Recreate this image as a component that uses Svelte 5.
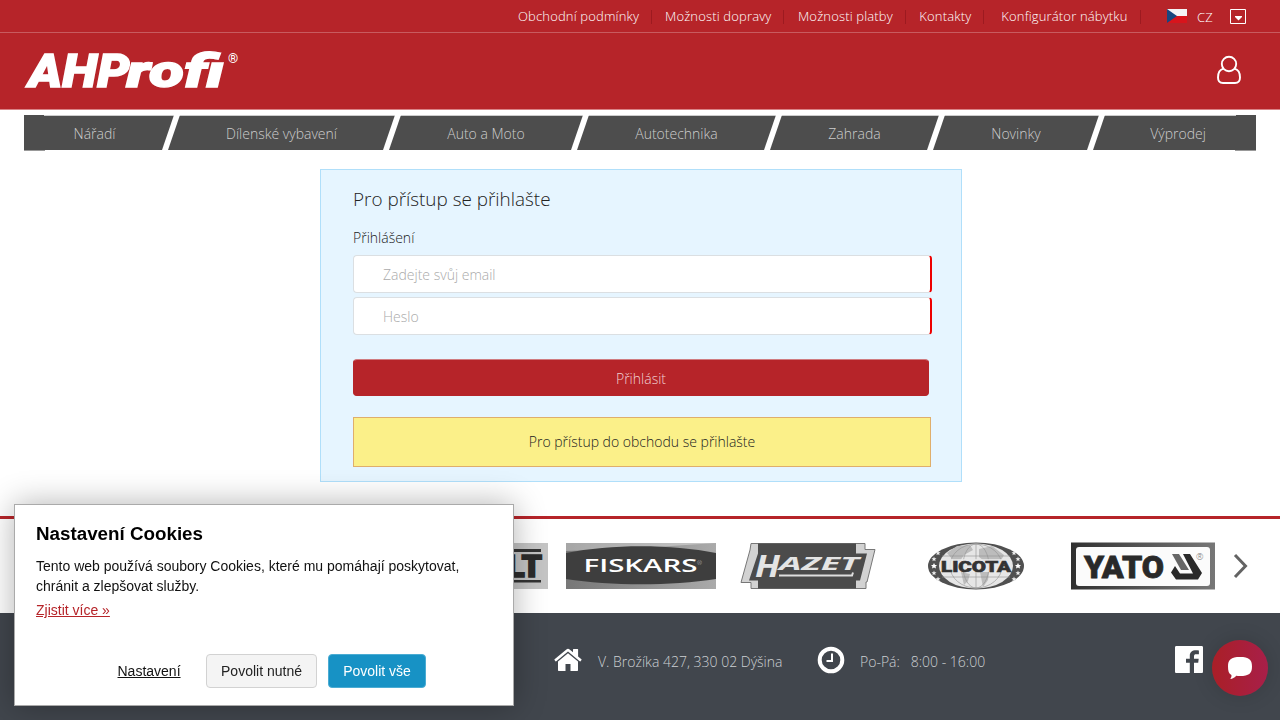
<script>
  const topLinks = [
    { label: 'Obchodní podmínky', gap: 13 },
    { label: 'Možnosti dopravy', gap: 13.5 },
    { label: 'Možnosti platby', gap: 13.5 },
    { label: 'Kontakty', gap: 17 },
    { label: 'Konfigurátor nábytku', gap: 0 }
  ];
  const categories = ['Nářadí', 'Dílenské vybavení', 'Auto a Moto', 'Autotechnika', 'Zahrada', 'Novinky', 'Výprodej'];
  const stars = [[-42, -7], [-38, -13], [-42, 7], [-38, 13], [42, -7], [38, -13], [42, 7], [38, 13]];
</script>

<div class="page">
  <header>
    <div class="topbar">
      {#each topLinks as link}
        <a href="#top" class="toplink">{link.label}</a><i class="sep" style="margin-right: {link.gap}px"></i>
      {/each}
      <div class="lang">
        <svg width="20" height="14" viewBox="0 0 20 14"><path fill="#f4f4f6" d="M0 0h20v7H0z" /><path fill="#d8141c" d="M0 7h20v7H0z" /><path fill="#17467f" d="M0 0l10 7-10 7z" /></svg>
        <span>CZ</span>
        <svg class="drop" width="16" height="15" viewBox="0 0 16 15"><path fill="none" stroke="#fff" d="M.5.5h15v14H.5z" /><path fill="#fff" d="M5 7h7v1L8.500 11.500 5 8z" /></svg>
      </div>
    </div>
    <div class="brandbar">
      <svg class="logo" width="220" height="60" viewBox="0 0 220 60">
        <text y="42.500" font-size="46" stroke="#fff" stroke-width="1.400"><tspan x="4.500" textLength="101" lengthAdjust="spacingAndGlyphs">AHP</tspan><tspan x="102.500" textLength="97" lengthAdjust="spacingAndGlyphs">rofi</tspan></text>
        <text class="reg" x="204" y="18.500" font-size="13">®</text>
      </svg>
      <svg class="user" width="26" height="30" viewBox="0 0 26 30" fill="none" stroke="#fff" stroke-width="1.900">
        <circle cx="13" cy="9" r="7.200" />
        <path d="M7.500 13.600C3.500 14.500 2 18 2 22.500c0 3.500 1.800 5.500 5 5.500h12c3.200 0 5-2 5-5.500 0-4.500-1.500-8-5.500-8.900" />
      </svg>
    </div>
  </header>

  <nav>
    {#each categories as c}
      <a href="#cat"><span>{c}</span></a>
    {/each}
  </nav>

  <main>
    <h1>Pro přístup se přihlašte</h1>
    <div class="label">Přihlášení</div>
    <input class="email" type="text" placeholder="Zadejte svůj email" />
    <input class="pass" type="password" placeholder="Heslo" />
    <button class="login">Přihlásit</button>
    <div class="notice">Pro přístup do obchodu se přihlašte</div>
  </main>

  <section class="brands">
    <svg class="b-lt" width="150" height="46" viewBox="0 0 150 46">
      <path fill="#c4c4c4" d="M0 0h150v46H0z" />
      <path fill="#333" d="M40 6h103v3H40zM40 37h103v2.500H40z" />
      <text x="109" y="34" font-family="Roboto" font-weight="900" font-size="31" textLength="35" lengthAdjust="spacingAndGlyphs" fill="#2c2c2c" stroke="#2c2c2c" stroke-width="1.500">LT</text>
    </svg>
    <svg class="b-fiskars" width="150" height="46" viewBox="0 0 150 46">
      <defs><linearGradient id="fg"><stop offset="0" stop-color="#777" /><stop offset="1" stop-color="#aaa" /></linearGradient></defs>
      <path fill="url(#fg)" d="M0 0h150v46H0z" />
      <path fill="#fff" d="M0 0h150L60 6 0 8z" opacity=".35" />
      <path fill="#3e3e3e" d="M0 10C45 1 105 1 150 10v26C105 43 45 43 0 36z" />
      <text x="17.500" y="29.300" font-family="Open Sans" font-weight="600" font-size="18" textLength="114" lengthAdjust="spacingAndGlyphs" fill="#fff">FISKARS</text>
      <text x="131" y="22" font-family="Open Sans" font-size="6" fill="#ddd">®</text>
    </svg>
    <svg class="b-hazet" width="136" height="48" viewBox="0 0 136 48">
      <path fill="#d2d2d2" stroke="#777" d="M11 1.500h114v6h10L127 40h-1v6.500H11v-6H1L10 8z" />
      <path fill="#4b4b4b" d="M18 1.500h98v10h11l-7 27h-4v8H18v-8H9l9-27z" />
      <path fill="none" stroke="#dedede" stroke-width="2" d="M39 33.500h73l1-3" />
      <g font-family="Open Sans" font-style="italic" font-weight="700" fill="#e4e4e4">
        <text x="15" y="35" font-size="30" textLength="25" lengthAdjust="spacingAndGlyphs">H</text>
        <text x="39" y="28" font-size="18" textLength="80" lengthAdjust="spacingAndGlyphs">AZET</text>
      </g>
    </svg>
    <svg class="b-licota" width="98" height="48" viewBox="-49 -24 98 48">
      <ellipse rx="48" ry="23.500" fill="#505050" />
      <ellipse rx="37" ry="22.500" fill="#e6e6e6" />
      <path fill="#bcbcbc" d="M-29-13l10-7 13-1 3 5-9 5-4 6-7-1zM3-17l13-3 12 9-5 9-12-1-8-6zM-15 6l9 2-2 7-4 4zM4 6l9 0-1 8-5 7z" />
      <g fill="none" stroke="#909090" stroke-width=".600"><ellipse rx="26" ry="22" /><ellipse rx="13" ry="22" /><path d="M0-22v44M-34-10h68M-34 11h68" /></g>
      <path fill="#e9e9e9" d="M-35-7h70V6h-70z" opacity=".8" />
      {#each stars as [x, y]}
        <path fill="#eee" transform="translate({x} {y})" d="M0-2.600L.7-.8 2.500-.8 1.100.4 1.600 2.200 0 1.200-1.600 2.200-1.100.4-2.500-.8-.7-.8z" />
      {/each}
      <path fill="#fff" d="M-42-3l1 2h2l-1.500 1.500.5 2-2-1-2 1 .5-2L-45-1h2zM42-3l1 2h2l-1.500 1.500.5 2-2-1-2 1 .5-2L39-1h2z" />
      <text x="-35" y="5.500" font-family="Roboto" font-weight="900" font-size="15.500" textLength="70" lengthAdjust="spacingAndGlyphs" fill="#333" stroke="#333" stroke-width=".6">LICOTA</text>
    </svg>
    <svg class="b-yato" width="144" height="48" viewBox="0 0 144 48">
      <defs><linearGradient id="yg"><stop offset="0" stop-color="#303030" /><stop offset=".5" stop-color="#555" /><stop offset="1" stop-color="#777" /></linearGradient></defs>
      <path fill="url(#yg)" d="M0 .5h144v47H0z" />
      <rect x="5" y="5" width="134" height="39" rx="3" fill="#fbfbfb" />
      <text x="13" y="36" font-family="Roboto" font-weight="900" font-size="32" textLength="80" lengthAdjust="spacingAndGlyphs" fill="#292929" stroke="#292929" stroke-width=".8">YATO</text>
      <path fill="#666" d="M101 12h7l10 16h-8z" />
      <path fill="#292929" d="M112 12h7l12 19-4 6.500h-22l-5-7 4-6.500 5 7.500h13z" />
      <text x="125" y="18" font-family="Open Sans" font-size="9" fill="#777">®</text>
    </svg>
    <svg class="arrow" width="16" height="26" viewBox="0 0 16 26"><path fill="none" stroke="#636363" stroke-width="3" d="M2 2l10.500 11L2 24" /></svg>
  </section>

  <footer>
    <svg class="home" width="28" height="24" viewBox="0 0 28 24" fill="#fff"><path d="M14 5.200L4 13.500V22c0 .8.4 1 1 1h6.500v-7h5v7H23c.7 0 1-.4 1-1v-8.500z" /><path d="M14 .8c.6 0 1.100.2 1.600.6L19 4.300V1.500c0-.4.200-.6.600-.6h4c.4 0 .5.200.5.600v7l3.300 2.800c.3.300.3.500.1.800l-1 1.100c-.3.300-.5.300-.8.100L14 3.500 2.300 13.300c-.3.200-.6.200-.8-.1l-1-1.100c-.2-.3-.2-.5.1-.8l11.800-9.900C12.900 1 13.400.8 14 .8z" /></svg>
    <span class="addr">V. Brožíka 427, 330 02 Dýšina</span>
    <svg class="clock" width="28" height="28" viewBox="0 0 28 28" fill="none" stroke="#fff"><circle cx="14" cy="14" r="11.300" stroke-width="4" /><path stroke-width="2" d="M15 7.500V15h-5.500" /></svg>
    <span class="hours">Po-Pá:&nbsp;&nbsp; 8:00 - 16:00</span>
    <svg class="fb" width="28" height="28" viewBox="0 0 28 28"><path fill="#fff" d="M1.500 0h25c1 0 1.500.5 1.500 1.500v24c0 1-.5 1.500-1.500 1.500H19V16.800h4.200l.5-4.100H19v-2.200c0-1.700.5-2.300 2.300-2.300h2.600V4.400c-5.900-.9-9.100.8-9.100 5.400v2.900H11v4.100h3.800V27H1.500C.5 27 0 26.500 0 25.500v-24C0 .5.500 0 1.500 0z" /></svg>
  </footer>
</div>

<div class="cookies">
  <h2>Nastavení Cookies</h2>
  <p>Tento web používá soubory Cookies, které mu pomáhají poskytovat, chránit a zlepšovat služby.</p>
  <a class="more" href="#more">Zjistit více »</a>
  <div class="actions">
    <a class="settings" href="#settings">Nastavení</a>
    <button class="need">Povolit nutné</button>
    <button class="all">Povolit vše</button>
  </div>
</div>

<button class="chat" aria-label="Chat">
  <svg width="26" height="24" viewBox="0 0 26 24"><path fill="#fff" d="M13 1c9 0 12 2.500 12 9.500S22 20 13 20c-1.400 0-2.700 0-3.800-.2C7.800 21.500 6 22.600 4 23c-.6 0-.7-.5-.3-.9.700-.8.900-1.700.7-3.100C1.800 17.500 1 15 1 10.500 1 3.500 4 1 13 1z" /></svg>
</button>

<style>
  :global(body) { margin: 0; background: #fff; overflow: hidden; }
  * { box-sizing: border-box; }
  a { color: inherit; text-decoration: none; }
  svg { display: block; flex: none; }
  button { font-family: inherit; padding: 0; }
  .page { width: 1280px; height: 720px; overflow: hidden; font-family: 'Open Sans', sans-serif; font-weight: 300; font-size: 14px; display: flex; flex-direction: column; white-space: nowrap; }
  header { background: #b62429; height: 110px; flex: none; color: #fff; border-bottom: 1px solid #d98386; }
  .topbar { height: 33px; border-bottom: 1px solid #c85b5f; display: flex; align-items: center; padding-left: 518px; font-size: 13px; letter-spacing: 0.16px; }
  .sep { width: 1px; height: 14px; background: #9d1a20; margin-left: 12px; margin-top: 2px; }
  .lang { display: flex; align-items: center; margin-left: 26.5px; }
  .lang span { margin: 2px 17px 0 10px; }
  .brandbar { display: flex; height: 76px; justify-content: space-between; padding: 11px 38px 0 24px; }
  .logo { font-family: Roboto, sans-serif; font-style: italic; font-weight: 900; fill: #fff; }
  .reg { font-style: normal; font-weight: 500; }
  .user { margin-top: 11px; }
  nav { margin: 5px 24px 0; height: 36px; flex: none; display: grid; grid-template-columns: 147px 221px 188px 193px 163px 160px 160px; background: linear-gradient(90deg, #999 21px, transparent 21px, transparent 1211px, #999 1211px); overflow: hidden; color: #ccc; }
  nav a { position: relative; height: 35px; background: #4d4d4d; border-top: 1px solid #ccc; display: flex; align-items: center; justify-content: center; }
  nav a:not(:last-child)::after { content: ''; position: absolute; z-index: 1; right: -3px; top: -1px; width: 6px; height: 35px; background: #fff; transform: skewX(-18.9deg); }
  nav a:first-child { padding-right: 6px; border-image: linear-gradient(90deg, #4d4d4d 21px, #ccc 21px) 1; }
  nav a:last-child { padding-left: 4px; border-image: linear-gradient(90deg, #ccc 139px, #4d4d4d 139px) 1; }
  main { margin: 18px 0 0 320px; width: 642px; height: 313px; flex: none; background: #e6f5ff; border: 1px solid #b0dffa; padding: 15px 29px 0 32px; display: flex; flex-direction: column; color: #222; }
  h1 { font-size: 18.9px; font-weight: 300; line-height: 28px; margin: 0; }
  .label { margin-top: 15px; line-height: 20px; }
  input { font: 300 14px 'Open Sans', sans-serif; width: 579px; height: 38px; border: 1px solid #dbdfe2; border-right: 2px solid #e00; border-radius: 4px; background: #fff; padding: 0 29px; outline: none; }
  input::placeholder { color: #aaa; opacity: 1; }
  .email { margin-top: 7px; }
  .pass { margin-top: 4px; }
  .login { margin-top: 24px; width: 576px; height: 37px; border: 1px solid #b62429; border-top-color: #d07b80; border-radius: 4px; background: #b62429; color: #f0d0d1; font-weight: 300; font-size: 14px; padding-top: 2px; }
  .notice { margin-top: 21px; width: 578px; height: 50px; background: #fbf089; border: 1px solid #dfae6c; text-align: center; line-height: 48px; }
  .brands { margin-top: 34px; height: 97px; flex: none; border-top: 3px solid #b62429; padding: 0 32px 0 398px; display: flex; align-items: center; }
  .b-fiskars { margin-left: 18px; }
  .b-hazet { margin-left: 24px; }
  .b-licota { margin-left: 51px; }
  .b-yato { margin-left: 46px; }
  .arrow { margin-left: 18px; }
  footer { background: #41464d; flex: 1; color: #ccd0d3; display: flex; align-items: flex-start; padding: 33px 0 0 554px; }
  .home { margin-top: 2px; }
  .addr, .hours { line-height: 20px; margin-top: 6px; }
  .addr { margin-left: 16px; width: 220px; }
  .clock { margin-left: -1px; }
  .hours { margin-left: 15px; width: 315px; }
  .cookies { position: fixed; left: 14px; top: 504px; width: 500px; height: 202px; background: #fff; border: 1px solid #aaa; box-shadow: 0 0 30px rgba(0, 0, 0, 0.3); padding: 17px 21px; font-family: 'Liberation Sans', sans-serif; font-size: 14px; color: #111; }
  h2 { font-size: 18.8px; line-height: 24px; margin: 0; color: #000; }
  p { margin: 10px 0 0; line-height: 20px; width: 440px; }
  .more { display: block; color: #b62429; text-decoration: underline; line-height: 20px; margin-top: 4px; }
  .actions { display: flex; align-items: center; margin: 34px 0 0 81.5px; }
  .settings { text-decoration: underline; width: 88.500px; }
  .actions button { height: 34px; border: 1px solid #d2d2d2; border-radius: 4px; font-size: 14px; }
  .need { width: 111px; background: #f4f4f4; color: #222; }
  .actions .all { width: 98px; margin-left: 11px; background: #1792c5; border-color: #4bacd3; color: #fff; }
  .chat { position: fixed; left: 1212px; top: 640px; width: 56px; height: 56px; border: 0; border-radius: 50%; background: linear-gradient(90deg, #aa1f27, #a81f49); box-shadow: 0 0 20px rgba(0, 0, 0, 0.15); display: flex; align-items: center; justify-content: center; }
</style>
